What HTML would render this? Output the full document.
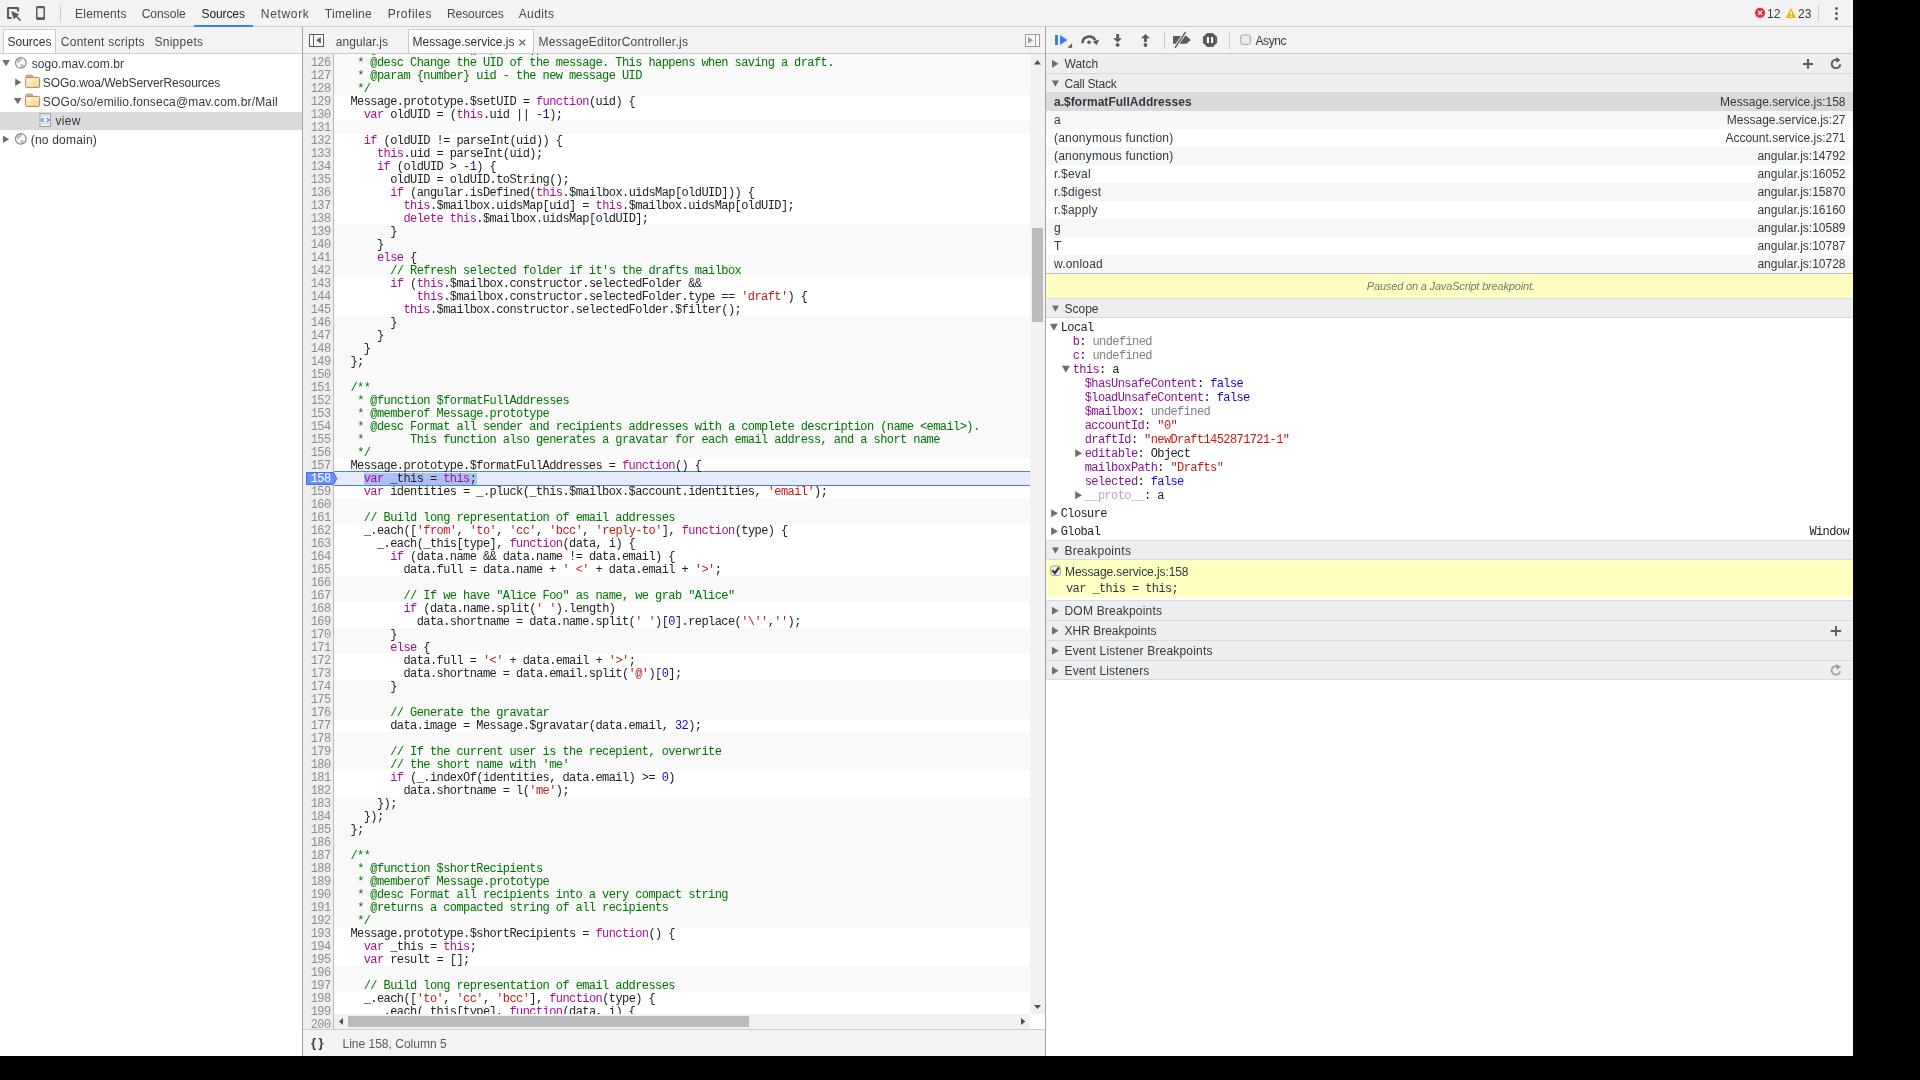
<!DOCTYPE html>
<html><head><meta charset="utf-8"><style>
*{box-sizing:border-box}
html,body{margin:0;padding:0}
body{width:1920px;height:1080px;background:#000;position:relative;overflow:hidden;font-family:"Liberation Sans", sans-serif;font-size:12px;color:#303942}
.abs{position:absolute}
#root{position:absolute;left:0;top:0;width:1853px;height:1056px;background:#fff;overflow:hidden;will-change:transform}
.tb{position:absolute;background:#f3f3f3}
.hl{position:absolute;height:1px;background:#cccccc}
.vl{position:absolute;width:1px;background:#cccccc}
.t{position:absolute;white-space:pre;line-height:14px}
.mono{font-family:"Liberation Mono", monospace;font-size:12px;letter-spacing:-0.6px}
.code{position:absolute;left:334px;top:54px;width:696px;height:960px;overflow:hidden}
.cl{position:absolute;left:0;width:696px;height:13px;white-space:pre;font-family:"Liberation Mono", monospace;font-size:12px;letter-spacing:-0.58px;line-height:13px;color:#222}
.cl span{}
.c{color:#007400}
.k{color:#aa0d91}
.s{color:#c41a16}
.n{color:#1c00cf}
.gut{position:absolute;left:303px;top:54px;width:30px;height:976px;background:#efefef;overflow:hidden}
.ln{position:absolute;left:0;width:27.5px;text-align:right;font-family:"Liberation Mono", monospace;font-size:12px;letter-spacing:-0.6px;line-height:13px;color:#8c8c8c;height:13px}
.ph{position:absolute;left:1046px;width:807px;height:19px;background:#eeeeee}
.tri{position:absolute;width:0;height:0}
</style></head>
<body><div id="root">
<div class="tb" style="left:0;top:0;width:1853px;height:26px"></div>
<div class="hl" style="left:0;top:26px;width:1853px"></div>
<div class="abs" style="left:60px;top:5px;width:1px;height:17px;background:#cccccc"></div>
<div class="t" style="left:75.1px;top:7px;color:#484848;letter-spacing:0.19px">Elements</div>
<div class="t" style="left:141.7px;top:7px;color:#484848;letter-spacing:0px">Console</div>
<div class="t" style="left:201.5px;top:7px;color:#222;letter-spacing:-0.1px">Sources</div>
<div class="t" style="left:260.8px;top:7px;color:#484848;letter-spacing:0.67px">Network</div>
<div class="t" style="left:324.8px;top:7px;color:#484848;letter-spacing:0.29px">Timeline</div>
<div class="t" style="left:387.8px;top:7px;color:#484848;letter-spacing:0.53px">Profiles</div>
<div class="t" style="left:447.0px;top:7px;color:#484848;letter-spacing:-0.09px">Resources</div>
<div class="t" style="left:518.7px;top:7px;color:#484848;letter-spacing:0.4px">Audits</div>
<div class="abs" style="left:194px;top:25px;width:59px;height:2px;background:#3d80f2"></div>
<div class="t" style="left:1767px;top:7px;color:#303942">12</div>
<div class="t" style="left:1798px;top:7px;color:#303942">23</div>
<div class="abs" style="left:1818px;top:5px;width:1px;height:17px;background:#cccccc"></div>
<div class="tb" style="left:0;top:27px;width:302px;height:26px"></div>
<div class="hl" style="left:0;top:53px;width:302px"></div>
<div class="abs" style="left:3px;top:29px;width:53px;height:24px;background:#fff;border:1px solid #cccccc;border-bottom:none"></div>
<div class="t" style="left:7.5px;top:35px;color:#333">Sources</div>
<div class="t" style="left:60.8px;top:35px;color:#484848;letter-spacing:0.26px">Content scripts</div>
<div class="t" style="left:154.5px;top:35px;color:#484848;letter-spacing:0.26px">Snippets</div>
<div class="abs" style="left:302px;top:27px;width:1px;height:1029px;background:#a3a3a3"></div>
<div class="abs" style="left:0;top:112px;width:302px;height:18px;background:#dadada"></div>
<div class="t" style="left:31.7px;top:57px;color:#303942;letter-spacing:0.09px">sogo.mav.com.br</div>
<div class="t" style="left:42.8px;top:76px;color:#303942;letter-spacing:-0.065px">SOGo.woa/WebServerResources</div>
<div class="t" style="left:42.8px;top:95px;color:#303942;letter-spacing:0.168px">SOGo/so/emilio.fonseca@mav.com.br/Mail</div>
<div class="t" style="left:55.5px;top:114px;color:#303942;letter-spacing:0.3px">view</div>
<div class="t" style="left:30.7px;top:133px;color:#303942;letter-spacing:0.21px">(no domain)</div>
<div class="tb" style="left:303px;top:27px;width:742px;height:26px"></div>
<div class="hl" style="left:303px;top:53px;width:742px"></div>
<div class="t" style="left:335.8px;top:35px;color:#484848;letter-spacing:0.08px">angular.js</div>
<div class="abs" style="left:408px;top:29px;width:126px;height:24px;background:#fff;border:1px solid #cccccc;border-bottom:none"></div>
<div class="t" style="left:412.5px;top:35px;color:#333">Message.service.js</div>
<div class="t" style="left:538.5px;top:35px;color:#484848;letter-spacing:0.24px">MessageEditorController.js</div>
<div class="gut">
<div class="ln" style="top:-10px;">125</div>
<div class="ln" style="top:3px;">126</div>
<div class="ln" style="top:16px;">127</div>
<div class="ln" style="top:29px;">128</div>
<div class="ln" style="top:42px;">129</div>
<div class="ln" style="top:55px;">130</div>
<div class="ln" style="top:68px;">131</div>
<div class="ln" style="top:81px;">132</div>
<div class="ln" style="top:94px;">133</div>
<div class="ln" style="top:107px;">134</div>
<div class="ln" style="top:120px;">135</div>
<div class="ln" style="top:133px;">136</div>
<div class="ln" style="top:146px;">137</div>
<div class="ln" style="top:159px;">138</div>
<div class="ln" style="top:172px;">139</div>
<div class="ln" style="top:185px;">140</div>
<div class="ln" style="top:198px;">141</div>
<div class="ln" style="top:211px;">142</div>
<div class="ln" style="top:224px;">143</div>
<div class="ln" style="top:237px;">144</div>
<div class="ln" style="top:250px;">145</div>
<div class="ln" style="top:263px;">146</div>
<div class="ln" style="top:276px;">147</div>
<div class="ln" style="top:289px;">148</div>
<div class="ln" style="top:302px;">149</div>
<div class="ln" style="top:315px;">150</div>
<div class="ln" style="top:328px;">151</div>
<div class="ln" style="top:341px;">152</div>
<div class="ln" style="top:354px;">153</div>
<div class="ln" style="top:367px;">154</div>
<div class="ln" style="top:380px;">155</div>
<div class="ln" style="top:393px;">156</div>
<div class="ln" style="top:406px;">157</div>
<div class="ln" style="top:419px;color:#fff">158</div>
<div class="ln" style="top:432px;">159</div>
<div class="ln" style="top:445px;">160</div>
<div class="ln" style="top:458px;">161</div>
<div class="ln" style="top:471px;">162</div>
<div class="ln" style="top:484px;">163</div>
<div class="ln" style="top:497px;">164</div>
<div class="ln" style="top:510px;">165</div>
<div class="ln" style="top:523px;">166</div>
<div class="ln" style="top:536px;">167</div>
<div class="ln" style="top:549px;">168</div>
<div class="ln" style="top:562px;">169</div>
<div class="ln" style="top:575px;">170</div>
<div class="ln" style="top:588px;">171</div>
<div class="ln" style="top:601px;">172</div>
<div class="ln" style="top:614px;">173</div>
<div class="ln" style="top:627px;">174</div>
<div class="ln" style="top:640px;">175</div>
<div class="ln" style="top:653px;">176</div>
<div class="ln" style="top:666px;">177</div>
<div class="ln" style="top:679px;">178</div>
<div class="ln" style="top:692px;">179</div>
<div class="ln" style="top:705px;">180</div>
<div class="ln" style="top:718px;">181</div>
<div class="ln" style="top:731px;">182</div>
<div class="ln" style="top:744px;">183</div>
<div class="ln" style="top:757px;">184</div>
<div class="ln" style="top:770px;">185</div>
<div class="ln" style="top:783px;">186</div>
<div class="ln" style="top:796px;">187</div>
<div class="ln" style="top:809px;">188</div>
<div class="ln" style="top:822px;">189</div>
<div class="ln" style="top:835px;">190</div>
<div class="ln" style="top:848px;">191</div>
<div class="ln" style="top:861px;">192</div>
<div class="ln" style="top:874px;">193</div>
<div class="ln" style="top:887px;">194</div>
<div class="ln" style="top:900px;">195</div>
<div class="ln" style="top:913px;">196</div>
<div class="ln" style="top:926px;">197</div>
<div class="ln" style="top:939px;">198</div>
<div class="ln" style="top:952px;">199</div>
<div class="ln" style="top:965px;">200</div>
</div>
<div class="abs" style="left:333px;top:54px;width:1px;height:976px;background:#bbbbbb"></div>
<div class="code">
<div class="abs" style="left:0;top:-11px;width:696px;height:13px;background:#f9f9f9"></div>
<div class="abs" style="left:0;top:2px;width:696px;height:13px;background:#f9f9f9"></div>
<div class="abs" style="left:0;top:15px;width:696px;height:13px;background:#f9f9f9"></div>
<div class="abs" style="left:0;top:28px;width:696px;height:13px;background:#f9f9f9"></div>
<div class="abs" style="left:0;top:41px;width:696px;height:13px;background:#fff"></div>
<div class="abs" style="left:0;top:54px;width:696px;height:13px;background:#fff"></div>
<div class="abs" style="left:0;top:67px;width:696px;height:13px;background:#f9f9f9"></div>
<div class="abs" style="left:0;top:80px;width:696px;height:13px;background:#fff"></div>
<div class="abs" style="left:0;top:93px;width:696px;height:13px;background:#fff"></div>
<div class="abs" style="left:0;top:106px;width:696px;height:13px;background:#fff"></div>
<div class="abs" style="left:0;top:119px;width:696px;height:13px;background:#fff"></div>
<div class="abs" style="left:0;top:132px;width:696px;height:13px;background:#fff"></div>
<div class="abs" style="left:0;top:145px;width:696px;height:13px;background:#fff"></div>
<div class="abs" style="left:0;top:158px;width:696px;height:13px;background:#fff"></div>
<div class="abs" style="left:0;top:171px;width:696px;height:13px;background:#f9f9f9"></div>
<div class="abs" style="left:0;top:184px;width:696px;height:13px;background:#f9f9f9"></div>
<div class="abs" style="left:0;top:197px;width:696px;height:13px;background:#f9f9f9"></div>
<div class="abs" style="left:0;top:210px;width:696px;height:13px;background:#f9f9f9"></div>
<div class="abs" style="left:0;top:223px;width:696px;height:13px;background:#fff"></div>
<div class="abs" style="left:0;top:236px;width:696px;height:13px;background:#fff"></div>
<div class="abs" style="left:0;top:249px;width:696px;height:13px;background:#fff"></div>
<div class="abs" style="left:0;top:262px;width:696px;height:13px;background:#f9f9f9"></div>
<div class="abs" style="left:0;top:275px;width:696px;height:13px;background:#f9f9f9"></div>
<div class="abs" style="left:0;top:288px;width:696px;height:13px;background:#f9f9f9"></div>
<div class="abs" style="left:0;top:301px;width:696px;height:13px;background:#f9f9f9"></div>
<div class="abs" style="left:0;top:314px;width:696px;height:13px;background:#f9f9f9"></div>
<div class="abs" style="left:0;top:327px;width:696px;height:13px;background:#f9f9f9"></div>
<div class="abs" style="left:0;top:340px;width:696px;height:13px;background:#f9f9f9"></div>
<div class="abs" style="left:0;top:353px;width:696px;height:13px;background:#f9f9f9"></div>
<div class="abs" style="left:0;top:366px;width:696px;height:13px;background:#f9f9f9"></div>
<div class="abs" style="left:0;top:379px;width:696px;height:13px;background:#f9f9f9"></div>
<div class="abs" style="left:0;top:392px;width:696px;height:13px;background:#f9f9f9"></div>
<div class="abs" style="left:0;top:405px;width:696px;height:13px;background:#fff"></div>
<div class="abs" style="left:0;top:418px;width:696px;height:13px;background:#fff"></div>
<div class="abs" style="left:0;top:431px;width:696px;height:13px;background:#fff"></div>
<div class="abs" style="left:0;top:444px;width:696px;height:13px;background:#f9f9f9"></div>
<div class="abs" style="left:0;top:457px;width:696px;height:13px;background:#f9f9f9"></div>
<div class="abs" style="left:0;top:470px;width:696px;height:13px;background:#fff"></div>
<div class="abs" style="left:0;top:483px;width:696px;height:13px;background:#fff"></div>
<div class="abs" style="left:0;top:496px;width:696px;height:13px;background:#fff"></div>
<div class="abs" style="left:0;top:509px;width:696px;height:13px;background:#fff"></div>
<div class="abs" style="left:0;top:522px;width:696px;height:13px;background:#f9f9f9"></div>
<div class="abs" style="left:0;top:535px;width:696px;height:13px;background:#f9f9f9"></div>
<div class="abs" style="left:0;top:548px;width:696px;height:13px;background:#fff"></div>
<div class="abs" style="left:0;top:561px;width:696px;height:13px;background:#fff"></div>
<div class="abs" style="left:0;top:574px;width:696px;height:13px;background:#f9f9f9"></div>
<div class="abs" style="left:0;top:587px;width:696px;height:13px;background:#f9f9f9"></div>
<div class="abs" style="left:0;top:600px;width:696px;height:13px;background:#fff"></div>
<div class="abs" style="left:0;top:613px;width:696px;height:13px;background:#fff"></div>
<div class="abs" style="left:0;top:626px;width:696px;height:13px;background:#f9f9f9"></div>
<div class="abs" style="left:0;top:639px;width:696px;height:13px;background:#f9f9f9"></div>
<div class="abs" style="left:0;top:652px;width:696px;height:13px;background:#f9f9f9"></div>
<div class="abs" style="left:0;top:665px;width:696px;height:13px;background:#fff"></div>
<div class="abs" style="left:0;top:678px;width:696px;height:13px;background:#f9f9f9"></div>
<div class="abs" style="left:0;top:691px;width:696px;height:13px;background:#f9f9f9"></div>
<div class="abs" style="left:0;top:704px;width:696px;height:13px;background:#f9f9f9"></div>
<div class="abs" style="left:0;top:717px;width:696px;height:13px;background:#fff"></div>
<div class="abs" style="left:0;top:730px;width:696px;height:13px;background:#fff"></div>
<div class="abs" style="left:0;top:743px;width:696px;height:13px;background:#f9f9f9"></div>
<div class="abs" style="left:0;top:756px;width:696px;height:13px;background:#f9f9f9"></div>
<div class="abs" style="left:0;top:769px;width:696px;height:13px;background:#f9f9f9"></div>
<div class="abs" style="left:0;top:782px;width:696px;height:13px;background:#f9f9f9"></div>
<div class="abs" style="left:0;top:795px;width:696px;height:13px;background:#f9f9f9"></div>
<div class="abs" style="left:0;top:808px;width:696px;height:13px;background:#f9f9f9"></div>
<div class="abs" style="left:0;top:821px;width:696px;height:13px;background:#f9f9f9"></div>
<div class="abs" style="left:0;top:834px;width:696px;height:13px;background:#f9f9f9"></div>
<div class="abs" style="left:0;top:847px;width:696px;height:13px;background:#f9f9f9"></div>
<div class="abs" style="left:0;top:860px;width:696px;height:13px;background:#f9f9f9"></div>
<div class="abs" style="left:0;top:873px;width:696px;height:13px;background:#fff"></div>
<div class="abs" style="left:0;top:886px;width:696px;height:13px;background:#fff"></div>
<div class="abs" style="left:0;top:899px;width:696px;height:13px;background:#fff"></div>
<div class="abs" style="left:0;top:912px;width:696px;height:13px;background:#f9f9f9"></div>
<div class="abs" style="left:0;top:925px;width:696px;height:13px;background:#f9f9f9"></div>
<div class="abs" style="left:0;top:938px;width:696px;height:13px;background:#fff"></div>
<div class="abs" style="left:0;top:951px;width:696px;height:13px;background:#fff"></div>
<div class="abs" style="left:0;top:964px;width:696px;height:13px;background:#fff"></div>
<div class="abs" style="left:0;top:417px;width:696px;height:15px;background:#e6ecfe;border-top:1px solid #4b7ef2;border-bottom:1px solid #4b7ef2"></div>
<div class="abs" style="left:30px;top:419px;width:113px;height:12px;background:#abbff3"></div>
<div class="cl" style="left:16.5px;top:-10px;height:11px;overflow:hidden"> <span class="c">* @memberof Message.prototype</span></div>
<div class="cl" style="left:16.5px;top:3px"> <span class="c">* @desc Change the UID of the message. This happens when saving a draft.</span></div>
<div class="cl" style="left:16.5px;top:16px"> <span class="c">* @param {number} uid - the new message UID</span></div>
<div class="cl" style="left:16.5px;top:29px"> <span class="c">*/</span></div>
<div class="cl" style="left:16.5px;top:42px">Message.prototype.$setUID = <span class="k">function</span>(uid) {</div>
<div class="cl" style="left:16.5px;top:55px">  <span class="k">var</span> oldUID = (<span class="k">this</span>.uid || -<span class="n">1</span>);</div>
<div class="cl" style="left:16.5px;top:68px"></div>
<div class="cl" style="left:16.5px;top:81px">  <span class="k">if</span> (oldUID != parseInt(uid)) {</div>
<div class="cl" style="left:16.5px;top:94px">    <span class="k">this</span>.uid = parseInt(uid);</div>
<div class="cl" style="left:16.5px;top:107px">    <span class="k">if</span> (oldUID &gt; -<span class="n">1</span>) {</div>
<div class="cl" style="left:16.5px;top:120px">      oldUID = oldUID.toString();</div>
<div class="cl" style="left:16.5px;top:133px">      <span class="k">if</span> (angular.isDefined(<span class="k">this</span>.$mailbox.uidsMap[oldUID])) {</div>
<div class="cl" style="left:16.5px;top:146px">        <span class="k">this</span>.$mailbox.uidsMap[uid] = <span class="k">this</span>.$mailbox.uidsMap[oldUID];</div>
<div class="cl" style="left:16.5px;top:159px">        <span class="k">delete</span> <span class="k">this</span>.$mailbox.uidsMap[oldUID];</div>
<div class="cl" style="left:16.5px;top:172px">      }</div>
<div class="cl" style="left:16.5px;top:185px">    }</div>
<div class="cl" style="left:16.5px;top:198px">    <span class="k">else</span> {</div>
<div class="cl" style="left:16.5px;top:211px">      <span class="c">// Refresh selected folder if it's the drafts mailbox</span></div>
<div class="cl" style="left:16.5px;top:224px">      <span class="k">if</span> (<span class="k">this</span>.$mailbox.constructor.selectedFolder &amp;&amp;</div>
<div class="cl" style="left:16.5px;top:237px">          <span class="k">this</span>.$mailbox.constructor.selectedFolder.type == <span class="s">'draft'</span>) {</div>
<div class="cl" style="left:16.5px;top:250px">        <span class="k">this</span>.$mailbox.constructor.selectedFolder.$filter();</div>
<div class="cl" style="left:16.5px;top:263px">      }</div>
<div class="cl" style="left:16.5px;top:276px">    }</div>
<div class="cl" style="left:16.5px;top:289px">  }</div>
<div class="cl" style="left:16.5px;top:302px">};</div>
<div class="cl" style="left:16.5px;top:315px"></div>
<div class="cl" style="left:16.5px;top:328px"><span class="c">/**</span></div>
<div class="cl" style="left:16.5px;top:341px"> <span class="c">* @function $formatFullAddresses</span></div>
<div class="cl" style="left:16.5px;top:354px"> <span class="c">* @memberof Message.prototype</span></div>
<div class="cl" style="left:16.5px;top:367px"> <span class="c">* @desc Format all sender and recipients addresses with a complete description (name &lt;email&gt;).</span></div>
<div class="cl" style="left:16.5px;top:380px"> <span class="c">*       This function also generates a gravatar for each email address, and a short name</span></div>
<div class="cl" style="left:16.5px;top:393px"> <span class="c">*/</span></div>
<div class="cl" style="left:16.5px;top:406px">Message.prototype.$formatFullAddresses = <span class="k">function</span>() {</div>
<div class="cl" style="left:16.5px;top:419px">  <span class="k">var</span> _this = <span class="k">this</span>;</div>
<div class="cl" style="left:16.5px;top:432px">  <span class="k">var</span> identities = _.pluck(_this.$mailbox.$account.identities, <span class="s">'email'</span>);</div>
<div class="cl" style="left:16.5px;top:445px"></div>
<div class="cl" style="left:16.5px;top:458px">  <span class="c">// Build long representation of email addresses</span></div>
<div class="cl" style="left:16.5px;top:471px">  _.each([<span class="s">'from'</span>, <span class="s">'to'</span>, <span class="s">'cc'</span>, <span class="s">'bcc'</span>, <span class="s">'reply-to'</span>], <span class="k">function</span>(type) {</div>
<div class="cl" style="left:16.5px;top:484px">    _.each(_this[type], <span class="k">function</span>(data, i) {</div>
<div class="cl" style="left:16.5px;top:497px">      <span class="k">if</span> (data.name &amp;&amp; data.name != data.email) {</div>
<div class="cl" style="left:16.5px;top:510px">        data.full = data.name + <span class="s">' &lt;'</span> + data.email + <span class="s">'&gt;'</span>;</div>
<div class="cl" style="left:16.5px;top:523px"></div>
<div class="cl" style="left:16.5px;top:536px">        <span class="c">// If we have "Alice Foo" as name, we grab "Alice"</span></div>
<div class="cl" style="left:16.5px;top:549px">        <span class="k">if</span> (data.name.split(<span class="s">' '</span>).length)</div>
<div class="cl" style="left:16.5px;top:562px">          data.shortname = data.name.split(<span class="s">' '</span>)[<span class="n">0</span>].replace(<span class="s">'\''</span>,<span class="s">''</span>);</div>
<div class="cl" style="left:16.5px;top:575px">      }</div>
<div class="cl" style="left:16.5px;top:588px">      <span class="k">else</span> {</div>
<div class="cl" style="left:16.5px;top:601px">        data.full = <span class="s">'&lt;'</span> + data.email + <span class="s">'&gt;'</span>;</div>
<div class="cl" style="left:16.5px;top:614px">        data.shortname = data.email.split(<span class="s">'@'</span>)[<span class="n">0</span>];</div>
<div class="cl" style="left:16.5px;top:627px">      }</div>
<div class="cl" style="left:16.5px;top:640px"></div>
<div class="cl" style="left:16.5px;top:653px">      <span class="c">// Generate the gravatar</span></div>
<div class="cl" style="left:16.5px;top:666px">      data.image = Message.$gravatar(data.email, <span class="n">32</span>);</div>
<div class="cl" style="left:16.5px;top:679px"></div>
<div class="cl" style="left:16.5px;top:692px">      <span class="c">// If the current user is the recepient, overwrite</span></div>
<div class="cl" style="left:16.5px;top:705px">      <span class="c">// the short name with 'me'</span></div>
<div class="cl" style="left:16.5px;top:718px">      <span class="k">if</span> (_.indexOf(identities, data.email) &gt;= <span class="n">0</span>)</div>
<div class="cl" style="left:16.5px;top:731px">        data.shortname = l(<span class="s">'me'</span>);</div>
<div class="cl" style="left:16.5px;top:744px">    });</div>
<div class="cl" style="left:16.5px;top:757px">  });</div>
<div class="cl" style="left:16.5px;top:770px">};</div>
<div class="cl" style="left:16.5px;top:783px"></div>
<div class="cl" style="left:16.5px;top:796px"><span class="c">/**</span></div>
<div class="cl" style="left:16.5px;top:809px"> <span class="c">* @function $shortRecipients</span></div>
<div class="cl" style="left:16.5px;top:822px"> <span class="c">* @memberof Message.prototype</span></div>
<div class="cl" style="left:16.5px;top:835px"> <span class="c">* @desc Format all recipients into a very compact string</span></div>
<div class="cl" style="left:16.5px;top:848px"> <span class="c">* @returns a compacted string of all recipients</span></div>
<div class="cl" style="left:16.5px;top:861px"> <span class="c">*/</span></div>
<div class="cl" style="left:16.5px;top:874px">Message.prototype.$shortRecipients = <span class="k">function</span>() {</div>
<div class="cl" style="left:16.5px;top:887px">  <span class="k">var</span> _this = <span class="k">this</span>;</div>
<div class="cl" style="left:16.5px;top:900px">  <span class="k">var</span> result = [];</div>
<div class="cl" style="left:16.5px;top:913px"></div>
<div class="cl" style="left:16.5px;top:926px">  <span class="c">// Build long representation of email addresses</span></div>
<div class="cl" style="left:16.5px;top:939px">  _.each([<span class="s">'to'</span>, <span class="s">'cc'</span>, <span class="s">'bcc'</span>], <span class="k">function</span>(type) {</div>
<div class="cl" style="left:16.5px;top:952px">    _.each(_this[type], <span class="k">function</span>(data, i) {</div>
<div class="cl" style="left:16.5px;top:965px">      _.each(_this[type], <span class="k">function</span>(data, i) {</div>
</div>
<div class="abs" style="left:1030px;top:54px;width:15px;height:960px;background:#f1f1f1"></div>
<div class="abs" style="left:1032px;top:228px;width:11px;height:94px;background:#bbbbbb"></div>
<div class="abs" style="left:334px;top:1014px;width:696px;height:15px;background:#f1f1f1"></div>
<div class="abs" style="left:348px;top:1016px;width:401px;height:11px;background:#bbbbbb"></div>
<div class="abs" style="left:1030px;top:1014px;width:15px;height:15px;background:#fff"></div>
<div class="hl" style="left:303px;top:1029px;width:742px;background:#cccccc"></div>
<div class="tb" style="left:303px;top:1030px;width:742px;height:26px"></div>
<div class="t" style="left:311px;top:1036px;color:#3a3a3a;font-size:13px;font-weight:bold;letter-spacing:2.5px">{}</div>
<div class="t" style="left:342.5px;top:1037px;color:#5a5a5a">Line 158, Column 5</div>
<div class="abs" style="left:1045px;top:27px;width:1px;height:1029px;background:#a3a3a3"></div>
<div class="tb" style="left:1046px;top:27px;width:807px;height:26px"></div>
<div class="hl" style="left:1046px;top:53px;width:807px"></div>
<div class="t" style="left:1255.5px;top:34px;color:#303942;letter-spacing:-0.4px">Async</div>
<div class="ph" style="top:54px;height:19px"></div>
<div class="hl" style="left:1046px;top:73px;width:807px;background:#dadada"></div>
<div class="t" style="left:1064.5px;top:57px;color:#303942;letter-spacing:0px">Watch</div>
<div class="ph" style="top:74px;height:18px"></div>
<div class="t" style="left:1064.5px;top:77px;color:#303942;letter-spacing:-0.2px">Call Stack</div>
<div class="abs" style="left:1046px;top:92px;width:807px;height:19px;background:#dadada"></div>
<div class="t" style="left:1054px;top:95px;font-weight:bold;color:#303942;letter-spacing:0.04px">a.$formatFullAddresses</div>
<div class="t" style="right:7.5px;top:95px;color:#303942">Message.service.js:158</div>
<div class="abs" style="left:1046px;top:111px;width:807px;height:18px;background:#f7f7f7"></div>
<div class="t" style="left:1054px;top:113px;font-weight:normal;color:#303942;letter-spacing:0.2px">a</div>
<div class="t" style="right:7.5px;top:113px;color:#303942">Message.service.js:27</div>
<div class="abs" style="left:1046px;top:129px;width:807px;height:18px;background:#fff"></div>
<div class="t" style="left:1054px;top:131px;font-weight:normal;color:#303942;letter-spacing:0.2px">(anonymous function)</div>
<div class="t" style="right:7.5px;top:131px;color:#303942">Account.service.js:271</div>
<div class="abs" style="left:1046px;top:147px;width:807px;height:18px;background:#f7f7f7"></div>
<div class="t" style="left:1054px;top:149px;font-weight:normal;color:#303942;letter-spacing:0.2px">(anonymous function)</div>
<div class="t" style="right:7.5px;top:149px;color:#303942">angular.js:14792</div>
<div class="abs" style="left:1046px;top:165px;width:807px;height:18px;background:#fff"></div>
<div class="t" style="left:1054px;top:167px;font-weight:normal;color:#303942;letter-spacing:0.2px">r.$eval</div>
<div class="t" style="right:7.5px;top:167px;color:#303942">angular.js:16052</div>
<div class="abs" style="left:1046px;top:183px;width:807px;height:18px;background:#f7f7f7"></div>
<div class="t" style="left:1054px;top:185px;font-weight:normal;color:#303942;letter-spacing:0.2px">r.$digest</div>
<div class="t" style="right:7.5px;top:185px;color:#303942">angular.js:15870</div>
<div class="abs" style="left:1046px;top:201px;width:807px;height:18px;background:#fff"></div>
<div class="t" style="left:1054px;top:203px;font-weight:normal;color:#303942;letter-spacing:0.2px">r.$apply</div>
<div class="t" style="right:7.5px;top:203px;color:#303942">angular.js:16160</div>
<div class="abs" style="left:1046px;top:219px;width:807px;height:18px;background:#f7f7f7"></div>
<div class="t" style="left:1054px;top:221px;font-weight:normal;color:#303942;letter-spacing:0.2px">g</div>
<div class="t" style="right:7.5px;top:221px;color:#303942">angular.js:10589</div>
<div class="abs" style="left:1046px;top:237px;width:807px;height:18px;background:#fff"></div>
<div class="t" style="left:1054px;top:239px;font-weight:normal;color:#303942;letter-spacing:0.2px">T</div>
<div class="t" style="right:7.5px;top:239px;color:#303942">angular.js:10787</div>
<div class="abs" style="left:1046px;top:255px;width:807px;height:18px;background:#f7f7f7"></div>
<div class="t" style="left:1054px;top:257px;font-weight:normal;color:#303942;letter-spacing:0.2px">w.onload</div>
<div class="t" style="right:7.5px;top:257px;color:#303942">angular.js:10728</div>
<div class="hl" style="left:1046px;top:273px;width:807px;background:#bdbdbd"></div>
<div class="abs" style="left:1046px;top:274px;width:807px;height:24px;background:#ffffc2"></div>
<div class="t" style="left:1366.8px;top:279px;color:#777;font-style:italic;font-size:11px;letter-spacing:-0.17px">Paused on a JavaScript breakpoint.</div>
<div class="ph" style="top:299px;height:18px"></div>
<div class="hl" style="left:1046px;top:298px;width:807px;background:#dcdce0"></div>
<div class="hl" style="left:1046px;top:317px;width:807px;background:#dadada"></div>
<div class="t" style="left:1064.5px;top:302px;color:#303942;letter-spacing:0px">Scope</div>
<div class="t mono" style="left:1060.7px;top:320.5px;color:#222">Local</div>
<div class="t mono" style="left:1072.7px;top:334.5px;color:#222"><span style="color:#881391">b</span>: <span style="color:#808080">undefined</span></div>
<div class="t mono" style="left:1072.7px;top:348.5px;color:#222"><span style="color:#881391">c</span>: <span style="color:#808080">undefined</span></div>
<div class="t mono" style="left:1072.7px;top:362.5px;color:#222"><span style="color:#881391">this</span>: a</div>
<div class="t mono" style="left:1084.7px;top:376.5px;color:#222"><span style="color:#881391">$hasUnsafeContent</span>: <span style="color:#1c00cf">false</span></div>
<div class="t mono" style="left:1084.7px;top:390.5px;color:#222"><span style="color:#881391">$loadUnsafeContent</span>: <span style="color:#1c00cf">false</span></div>
<div class="t mono" style="left:1084.7px;top:404.5px;color:#222"><span style="color:#881391">$mailbox</span>: <span style="color:#808080">undefined</span></div>
<div class="t mono" style="left:1084.7px;top:418.5px;color:#222"><span style="color:#881391">accountId</span>: <span style="color:#c41a16">"0"</span></div>
<div class="t mono" style="left:1084.7px;top:432.5px;color:#222"><span style="color:#881391">draftId</span>: <span style="color:#c41a16">"newDraft1452871721-1"</span></div>
<div class="t mono" style="left:1084.7px;top:446.5px;color:#222"><span style="color:#881391">editable</span>: Object</div>
<div class="t mono" style="left:1084.7px;top:460.5px;color:#222"><span style="color:#881391">mailboxPath</span>: <span style="color:#c41a16">"Drafts"</span></div>
<div class="t mono" style="left:1084.7px;top:474.5px;color:#222"><span style="color:#881391">selected</span>: <span style="color:#1c00cf">false</span></div>
<div class="t mono" style="left:1084.7px;top:488.5px;color:#222"><span style="color:#c39fc7">__proto__</span>: a</div>
<div class="t mono" style="left:1060.7px;top:506.5px;color:#222">Closure</div>
<div class="t mono" style="left:1060.7px;top:524.5px;color:#222">Global</div>
<div class="t mono" style="right:4px;top:524.5px;color:#222">Window</div>
<div class="ph" style="top:541px;height:18px"></div>
<div class="hl" style="left:1046px;top:540px;width:807px;background:#d9d9d9"></div>
<div class="hl" style="left:1046px;top:559px;width:807px;background:#dadada"></div>
<div class="t" style="left:1064.5px;top:544px;color:#303942;letter-spacing:0.31px">Breakpoints</div>
<div class="abs" style="left:1046px;top:560px;width:807px;height:37px;background:#ffffc2"></div>
<div class="t" style="left:1065px;top:565px;color:#303942;letter-spacing:-0.09px">Message.service.js:158</div>
<div class="t mono" style="left:1066px;top:582px;color:#303942">var _this = this;</div>
<div class="ph" style="top:601px;height:19px"></div>
<div class="hl" style="left:1046px;top:600px;width:807px;background:#dadada"></div>
<div class="hl" style="left:1046px;top:620px;width:807px;background:#dadada"></div>
<div class="t" style="left:1064.5px;top:604px;color:#303942;letter-spacing:0.2px">DOM Breakpoints</div>
<div class="ph" style="top:621px;height:19px"></div>
<div class="hl" style="left:1046px;top:640px;width:807px;background:#dadada"></div>
<div class="t" style="left:1064.5px;top:624px;color:#303942;letter-spacing:0px">XHR Breakpoints</div>
<div class="ph" style="top:641px;height:19px"></div>
<div class="hl" style="left:1046px;top:660px;width:807px;background:#dadada"></div>
<div class="t" style="left:1064.5px;top:644px;color:#303942;letter-spacing:0.18px">Event Listener Breakpoints</div>
<div class="ph" style="top:661px;height:18px"></div>
<div class="hl" style="left:1046px;top:679px;width:807px;background:#dadada"></div>
<div class="t" style="left:1064.5px;top:664px;color:#303942;letter-spacing:0.15px">Event Listeners</div>
<svg class="abs" style="left:0;top:0" width="1853" height="1056" viewBox="0 0 1853 1056"><defs><linearGradient id="fgrad" x1="0" y1="0" x2="1" y2="1"><stop offset="0" stop-color="#fff9dc"/><stop offset="0.6" stop-color="#fde0a8"/><stop offset="1" stop-color="#fbd399"/></linearGradient></defs><path d="M18,11.6 V8.2 Q18,8 17.8,8 H8.2 Q8,8 8,8.2 V17.8 Q8,18 8.2,18 H11.6" fill="none" stroke="#5a5a5a" stroke-width="2.1"/>
<polygon points="11,11 19.2,14.3 13.8,19.2" fill="#5a5a5a"/>
<line x1="15.5" y1="15.5" x2="20.6" y2="20.6" stroke="#5a5a5a" stroke-width="1.5"/>
<path fill-rule="evenodd" fill="#5a5a5a" d="M37.5,6 H43.5 Q45,6 45,7.5 V18.5 Q45,20 43.5,20 H37.5 Q36,20 36,18.5 V7.5 Q36,6 37.5,6 Z M37.5,8.3 V17.3 H43.5 V8.3 Z"/>
<circle cx="1760.1" cy="12.85" r="5.05" fill="#e0313b"/>
<path d="M1758.1,10.9 L1762.1,14.9 M1762.1,10.9 L1758.1,14.9" stroke="#fff" stroke-width="1.3"/>
<polygon points="1785.8,17.9 1796.1,17.9 1790.95,7.9" fill="#f2b600"/>
<rect x="1790.3" y="11.1" width="1.4" height="3.6" fill="#fff"/>
<rect x="1790.3" y="15.6" width="1.4" height="1.3" fill="#fff"/>
<circle cx="1836.5" cy="8.4" r="1.5" fill="#5a5a5a"/><circle cx="1836.5" cy="13.5" r="1.5" fill="#5a5a5a"/><circle cx="1836.5" cy="18.6" r="1.5" fill="#5a5a5a"/>
<polygon points="2.2,60.1 9.9,60.1 6.050000000000001,66.2" fill="#6e6e6e"/>
<circle cx="20.799999999999997" cy="62.9" r="5.3" fill="#fdfdfd"/>
<polygon points="17.20,58.70 21.10,58.10 21.80,59.90 19.60,61.40 19.00,63.30 16.80,62.40" fill="#bdbdbd"/>
<polygon points="20.20,64.10 23.00,64.30 24.00,65.50 22.80,67.80 21.00,67.90 20.60,65.90" fill="#bdbdbd"/>
<circle cx="20.799999999999997" cy="62.9" r="5.3" fill="none" stroke="#8c8c8c" stroke-width="1.3"/>
<polygon points="15.2,78.4 21.299999999999997,82.15 15.2,85.9" fill="#6e6e6e"/>
<path d="M26.2,77.1 V75.9 Q26.2,75.2 26.9,75.2 H31.6 Q32.4,75.2 32.4,76.0 V77.1 Z" fill="#f3deb0" stroke="#a88866" stroke-width="1"/>
<rect x="25.6" y="77.4" width="14" height="10" rx="1" fill="url(#fgrad)" stroke="#a88866" stroke-width="1"/>
<polygon points="13.9,98.1 21.6,98.1 17.75,104.19999999999999" fill="#6e6e6e"/>
<path d="M26.2,96.1 V94.9 Q26.2,94.2 26.9,94.2 H31.6 Q32.4,94.2 32.4,95.0 V96.1 Z" fill="#f3deb0" stroke="#a88866" stroke-width="1"/>
<rect x="25.6" y="96.4" width="14" height="10" rx="1" fill="url(#fgrad)" stroke="#a88866" stroke-width="1"/>
<rect x="40.0" y="113.7" width="10.5" height="12.8" fill="#f4f4f4" stroke="#9d9d9d" stroke-width="1"/>
<rect x="41.5" y="115.2" width="7.5" height="1" fill="#d0d0d0"/>
<rect x="41.5" y="123.2" width="7.5" height="1" fill="#d0d0d0"/>
<path d="M43.8,118.0 L41.3,120.0 L43.8,122.0 M46.7,118.0 L49.2,120.0 L46.7,122.0" fill="none" stroke="#4a8cf2" stroke-width="1.4"/>
<polygon points="3,135.4 9.1,139.15 3,142.9" fill="#6e6e6e"/>
<circle cx="20.799999999999997" cy="138.9" r="5.3" fill="#fdfdfd"/>
<polygon points="17.20,134.70 21.10,134.10 21.80,135.90 19.60,137.40 19.00,139.30 16.80,138.40" fill="#bdbdbd"/>
<polygon points="20.20,140.10 23.00,140.30 24.00,141.50 22.80,143.80 21.00,143.90 20.60,141.90" fill="#bdbdbd"/>
<circle cx="20.799999999999997" cy="138.9" r="5.3" fill="none" stroke="#8c8c8c" stroke-width="1.3"/>
<rect x="309.5" y="34.5" width="14" height="12" fill="#fff" stroke="#5a5a5a" stroke-width="1"/>
<line x1="313.5" y1="34.5" x2="313.5" y2="46.5" stroke="#5a5a5a" stroke-width="1"/>
<rect x="315" y="36" width="7" height="9" fill="#f3f3f3"/>
<polygon points="316.1,40.3 320.8,37.3 320.8,43.3" fill="#5a5a5a"/>
<path d="M519.3,39.6 L525.3,45.4 M525.3,39.6 L519.3,45.4" stroke="#5a5a5a" stroke-width="1.3"/>
<rect x="1025.5" y="34.5" width="14" height="12" fill="#fff" stroke="#9a9a9a" stroke-width="1"/>
<line x1="1035.5" y1="34.5" x2="1035.5" y2="46.5" stroke="#9a9a9a" stroke-width="1"/>
<rect x="1027" y="36" width="7" height="9" fill="#f3f3f3"/>
<polygon points="1032.9,40.3 1028.1,37.1 1028.1,43.5" fill="#9a9a9a"/>
<path d="M306.5,472.5 H333.5 L336.8,478.5 L333.5,484.5 H306.5 Z" fill="#6b8ff8" stroke="#3a6ef0" stroke-width="1"/>
<polygon points="1034.0,64.4 1041.0,64.4 1037.5,60" fill="#505050"/>
<polygon points="1034.0,1005 1041.0,1005 1037.5,1009" fill="#505050"/>
<polygon points="343,1017.9 339,1021.5 343,1025.1" fill="#505050"/>
<polygon points="1021,1017.9 1025.4,1021.5 1021,1025.1" fill="#505050"/>
<rect x="1055" y="35" width="3" height="10" fill="#3d7ff0"/>
<polygon points="1060,35 1067.6,40 1060,45" fill="#3d7ff0"/>
<polygon points="1072.1,43.2 1072.1,47.8 1067.4,47.8" fill="#5a5a5a"/>
<path d="M1082.4,43.2 A6.8,6.8 0 0 1 1095.2,40.2" fill="none" stroke="#5a5a5a" stroke-width="2.5"/>
<polygon points="1093,41.6 1099.2,39.6 1096.6,45.2" fill="#5a5a5a"/>
<circle cx="1089" cy="42.3" r="1.8" fill="#5a5a5a"/>
<rect x="1116.2" y="34" width="2.9" height="4.8" fill="#5a5a5a"/>
<polygon points="1113,38.3 1122,38.3 1117.6,42.2" fill="#5a5a5a"/>
<circle cx="1117.6" cy="44.9" r="1.9" fill="#5a5a5a"/>
<rect x="1144" y="37.6" width="2.9" height="4.3" fill="#5a5a5a"/>
<polygon points="1141.1,38.2 1149.8,38.2 1145.45,34" fill="#5a5a5a"/>
<circle cx="1145.45" cy="44.9" r="1.9" fill="#5a5a5a"/>
<rect x="1164" y="32" width="1" height="17" fill="#cccccc"/>
<path d="M1173,36 H1186.5 L1190.8,39.9 L1186.5,43.7 H1173 Z" fill="#5a5a5a"/>
<line x1="1186" y1="31.5" x2="1174.5" y2="48.3" stroke="#f3f3f3" stroke-width="3.2"/>
<line x1="1185.6" y1="32" x2="1175" y2="47.8" stroke="#5a5a5a" stroke-width="1.4"/>
<polygon points="1207.1,33 1212.9,33 1217.1,37.1 1217.1,42.8 1212.9,46.9 1207.1,46.9 1202.9,42.8 1202.9,37.1" fill="#5a5a5a"/>
<rect x="1206.9" y="37.1" width="2.1" height="5.9" fill="#fff"/>
<rect x="1211.1" y="37.1" width="2" height="5.9" fill="#fff"/>
<rect x="1229" y="32" width="1" height="17" fill="#cccccc"/>
<rect x="1240.7" y="35" width="9.8" height="9.4" rx="2" fill="#ebebeb" stroke="#a6a6a6" stroke-width="1"/>
<polygon points="1052,59.7 1058.5,63.7 1052,67.7" fill="#6e6e6e"/>
<path d="M1803,64 H1813 M1808,59 V68.8" stroke="#5a5a5a" stroke-width="2"/>
<path d="M1840.3,64.3 A4.3,4.3 0 1 1 1837.2,59.8" fill="none" stroke="#5a5a5a" stroke-width="1.9"/>
<polygon points="1836.3,56.9 1840.4,59.9 1836.3,63" fill="#5a5a5a"/>
<polygon points="1051.9,80.5 1058.9,80.5 1055.4,86.8" fill="#6e6e6e"/>
<polygon points="1051.9,305.5 1058.9,305.5 1055.4,311.8" fill="#6e6e6e"/>
<polygon points="1049.9,323.7 1057.9,323.7 1053.9,330.7" fill="#6e6e6e"/>
<polygon points="1061.9,365.7 1069.9,365.7 1065.9,372.7" fill="#6e6e6e"/>
<polygon points="1075.2,449.2 1082.0,453.2 1075.2,457.2" fill="#6e6e6e"/>
<polygon points="1075.2,491.2 1082.0,495.2 1075.2,499.2" fill="#6e6e6e"/>
<polygon points="1051.2,509.2 1058.0,513.2 1051.2,517.2" fill="#6e6e6e"/>
<polygon points="1051.2,527.2 1058.0,531.2 1051.2,535.2" fill="#6e6e6e"/>
<polygon points="1051.9,547.5 1058.9,547.5 1055.4,553.8" fill="#6e6e6e"/>
<rect x="1050.8" y="565.9" width="9.6" height="9.6" rx="2" fill="#ededed" stroke="#a0a0a0" stroke-width="1"/>
<path d="M1052.4,570.4 L1054.9,573.2 L1059,567.4" fill="none" stroke="#333" stroke-width="2.1"/>
<polygon points="1052,606.7 1058.5,610.7 1052,614.7" fill="#6e6e6e"/>
<polygon points="1052,626.7 1058.5,630.7 1052,634.7" fill="#6e6e6e"/>
<path d="M1830.8,631 H1841.1 M1835.95,625.9 V636.1" stroke="#5a5a5a" stroke-width="1.8"/>
<polygon points="1052,646.7 1058.5,650.7 1052,654.7" fill="#6e6e6e"/>
<polygon points="1052,666.7 1058.5,670.7 1052,674.7" fill="#6e6e6e"/>
<path d="M1840.2,671.1 A4.3,4.3 0 1 1 1837.8,666.5" fill="none" stroke="#a0a0a0" stroke-width="1.7"/>
<polygon points="1836.2,664.1 1841.2,666.8 1836.6,669.7" fill="#a0a0a0"/></svg><div class="ln" style="left:303px;top:473px;color:#fff">158</div>
</div></body></html>
